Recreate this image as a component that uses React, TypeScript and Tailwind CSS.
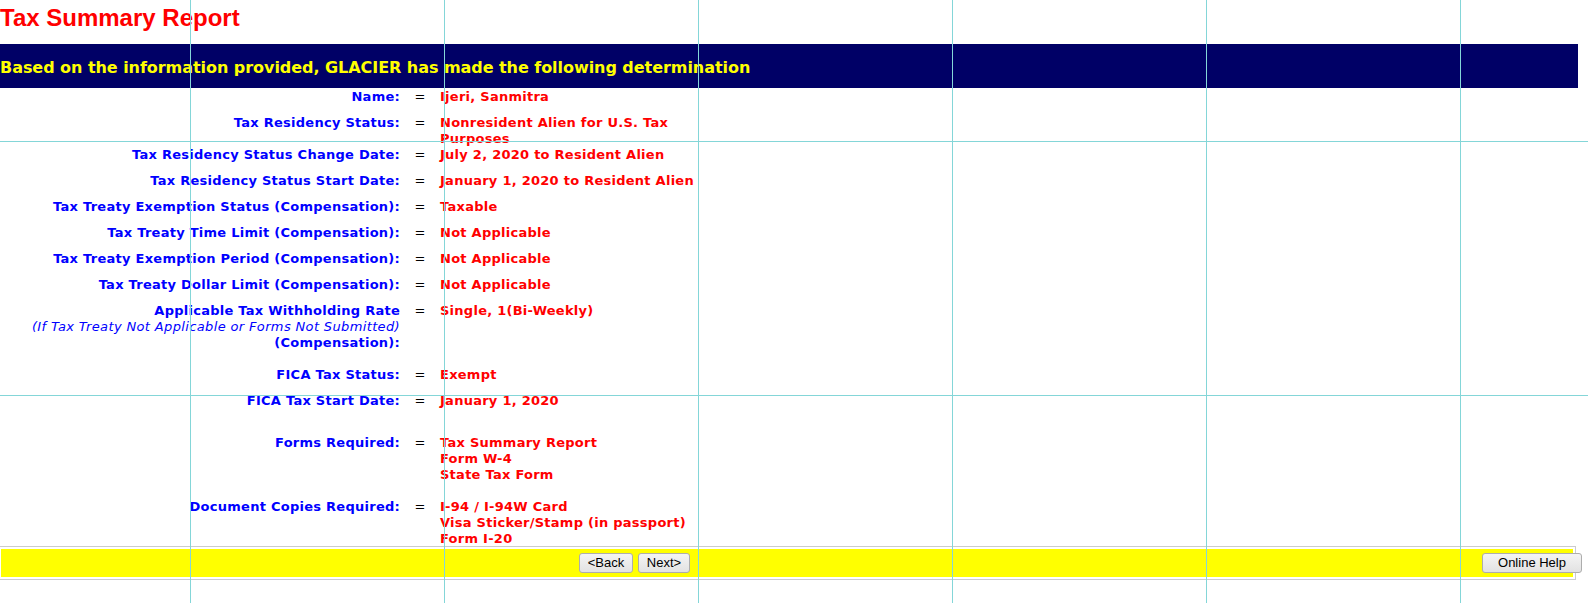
import React from 'react';

type Row = {
  label: string;
  note?: string;
  labelTail?: string;
  value: string[];
  spaceAfter?: boolean;
};

const rows: Row[] = [
  { label: 'Name:', value: ['Ijeri, Sanmitra'] },
  { label: 'Tax Residency Status:', value: ['Nonresident Alien for U.S. Tax', 'Purposes'] },
  { label: 'Tax Residency Status Change Date:', value: ['July 2, 2020 to Resident Alien'] },
  { label: 'Tax Residency Status Start Date:', value: ['January 1, 2020 to Resident Alien'] },
  { label: 'Tax Treaty Exemption Status (Compensation):', value: ['Taxable'] },
  { label: 'Tax Treaty Time Limit (Compensation):', value: ['Not Applicable'] },
  { label: 'Tax Treaty Exemption Period (Compensation):', value: ['Not Applicable'] },
  { label: 'Tax Treaty Dollar Limit (Compensation):', value: ['Not Applicable'] },
  {
    label: 'Applicable Tax Withholding Rate',
    note: '(If Tax Treaty Not Applicable or Forms Not Submitted)',
    labelTail: '(Compensation):',
    value: ['Single, 1(Bi-Weekly)'],
    spaceAfter: true,
  },
  { label: 'FICA Tax Status:', value: ['Exempt'] },
  { label: 'FICA Tax Start Date:', value: ['January 1, 2020'], spaceAfter: true },
  {
    label: 'Forms Required:',
    value: ['Tax Summary Report', 'Form W-4', 'State Tax Form'],
    spaceAfter: true,
  },
  {
    label: 'Document Copies Required:',
    value: ['I-94 / I-94W Card', 'Visa Sticker/Stamp (in passport)', 'Form I-20'],
  },
];

const gridX = [190, 444, 698, 952, 1206, 1460];
const gridY = [141, 395];

function Button({ children, className = '' }: { children: React.ReactNode; className?: string }) {
  return (
    <button
      className={
        'h-[20px] rounded-[3px] border border-[#adadad] bg-gradient-to-b from-[#f4f4f4] to-[#e2e2e2] px-[6px] font-["Liberation_Sans",Arial,sans-serif] text-[13px] leading-[18px] text-black ' +
        className
      }
    >
      {children}
    </button>
  );
}

export default function App() {
  return (
    <div className="relative h-[603px] w-[1588px] overflow-hidden bg-white">
      {/* Title */}
      <div className="h-[44px] pt-[4px]">
        <h2 className="font-['Liberation_Sans',Arial,sans-serif] text-[24px] font-bold leading-[28px] text-[#ff0000]">
          Tax Summary Report
        </h2>
      </div>

      {/* Banner */}
      <div className="flex h-[44px] w-[1578px] items-center bg-[#000066] pt-[4px]">
        <span className="font-['DejaVu_Sans',Verdana,sans-serif] text-[16px] font-bold tracking-[-0.05px] text-[#ffff00]">
          Based on the information provided, GLACIER has made the following determination
        </span>
      </div>

      {/* Details */}
      <div className="pt-[1px] font-['DejaVu_Sans',Verdana,sans-serif] text-[13px] leading-[16px] tracking-[0.26px]">
        {rows.map((r) => (
          <div key={r.label} className={'flex min-h-[26px] items-start' + (r.spaceAfter ? ' mb-4' : '')}>
            <div className="w-[400px] text-right text-[#0000ff]">
              <div className="font-bold">{r.label}</div>
              {r.note && <div className="italic tracking-[0.36px]">{r.note}</div>}
              {r.labelTail && <div className="font-bold">{r.labelTail}</div>}
            </div>
            <div className="w-[40px] text-center text-black">=</div>
            <div className="font-bold text-[#ff0000]">
              {r.value.map((v) => (
                <div key={v} className="whitespace-nowrap">
                  {v}
                </div>
              ))}
            </div>
          </div>
        ))}
      </div>

      {/* Button bar */}
      <div className="-ml-[2px] -mt-[1px] w-[1578px] border border-[#cccccc] px-[2px] pt-[2px] pb-[2px]">
        <div className="flex h-[28px] items-center bg-[#ffff00] pl-[578px]">
          <div className="flex gap-[5px]">
            <Button className="w-[54px]">&lt;Back</Button>
            <Button className="w-[52px]">Next&gt;</Button>
          </div>
          <div className="flex-1" />
          <Button className="-mr-[9px] w-[100px]">Online Help</Button>
        </div>
      </div>

      {/* Guide overlay */}
      <div className="pointer-events-none absolute inset-0">
        {gridX.map((x) => (
          <div key={x} className="absolute top-0 h-full w-px bg-[#84d6d8]" style={{ left: x }} />
        ))}
        {gridY.map((y) => (
          <div key={y} className="absolute left-0 h-px w-full bg-[#84d6d8]" style={{ top: y }} />
        ))}
      </div>
    </div>
  );
}
